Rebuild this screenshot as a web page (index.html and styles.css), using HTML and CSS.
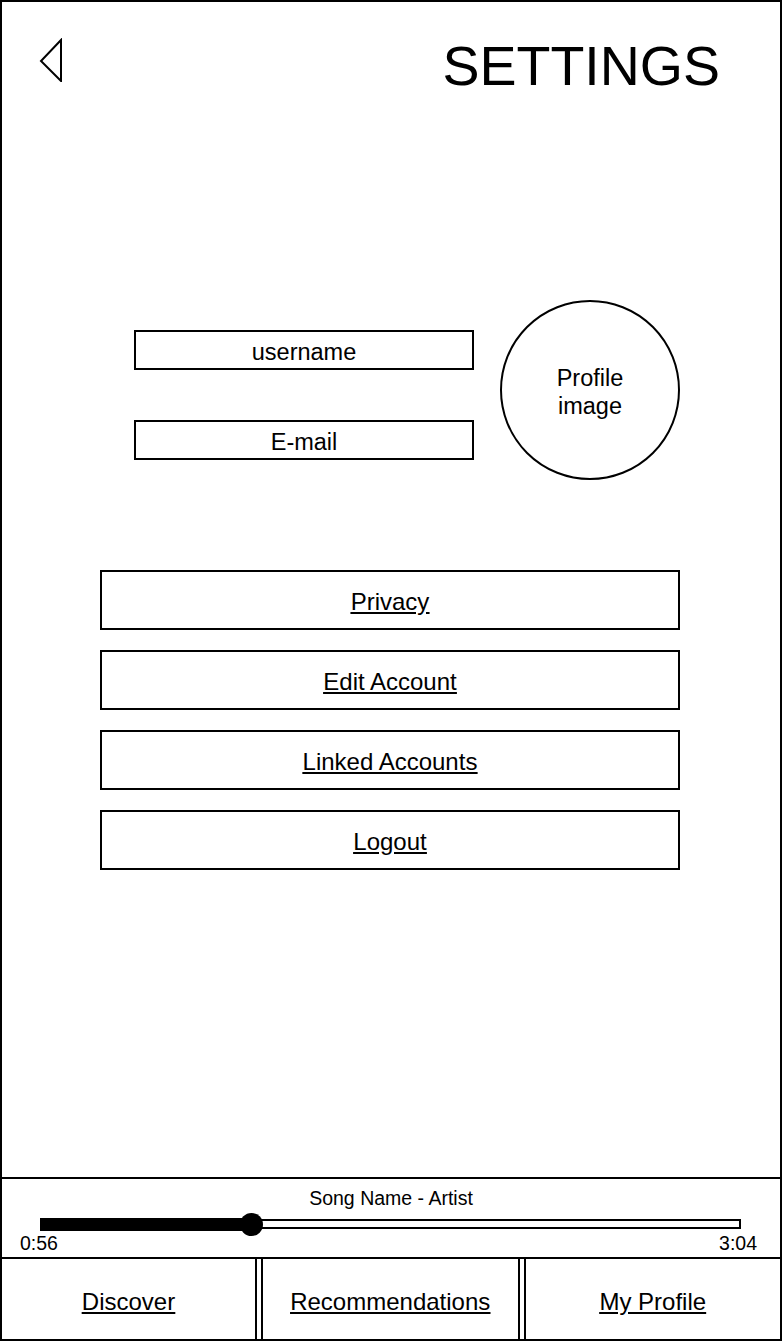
FILE: index.html
```html
<!DOCTYPE html>
<html lang="en">
<head>
    <meta charset="UTF-8">
    <meta name="viewport" content="width=device-width, initial-scale=1.0">
    <title>Settings</title>
    <link rel="stylesheet" href="styles.css">
</head>
<body>
    <div class="phone">
        <div class="header">
            <a href="#" class="back-link" aria-label="Back">
                <svg width="24" height="44" viewBox="0 0 24 44">
                    <polygon points="22,2 2,23 22,43" fill="none" stroke="#000" stroke-width="2"/>
                </svg>
            </a>
            <h1>SETTINGS</h1>
        </div>

        <div class="content">
            <div class="profile">
                <div class="fields">
                    <div class="field">username</div>
                    <div class="field">E-mail</div>
                </div>
                <div class="avatar">Profile<br>image</div>
            </div>

            <div class="menu">
                <a href="#" class="menu-btn"><span>Privacy</span></a>
                <a href="#" class="menu-btn"><span>Edit Account</span></a>
                <a href="#" class="menu-btn"><span>Linked Accounts</span></a>
                <a href="#" class="menu-btn"><span>Logout</span></a>
            </div>
        </div>

        <!-- now playing -->
        <div class="player">
            <div class="song">Song Name - Artist</div>
            <div class="progress">
                <div class="progress-fill" style="width: 30.1%"></div>
                <div class="progress-knob" style="left: 30.1%"></div>
            </div>
            <div class="times">
                <span>0:56</span>
                <span>3:04</span>
            </div>
        </div>

        <div class="nav">
            <a href="#" class="nav-item"><span>Discover</span></a>
            <div class="nav-divider"></div>
            <a href="#" class="nav-item"><span>Recommendations</span></a>
            <div class="nav-divider"></div>
            <a href="#" class="nav-item"><span>My Profile</span></a>
        </div>
    </div>
</body>
</html>
```

FILE: styles.css
```css
* {
    box-sizing: border-box;
}
body {
    margin: 0;
    font-family: "Liberation Sans", Arial, Helvetica, sans-serif;
    color: #000;
    background: #fff;
}
.phone {
    width: 782px;
    height: 1341px;
    border: 2px solid #000;
    display: flex;
    flex-direction: column;
}
.header {
    display: flex;
    justify-content: space-between;
    align-items: flex-start;
}
.back-link {
    display: block;
    margin: 36px 0 0 37px;
    line-height: 0;
}
.header h1 {
    margin: 36px 60px 0 0;
    font-size: 55.5px;
    line-height: 56px;
    font-weight: 400;
}
.content {
    flex: 1;
    padding: 0 100px 0 98px;
}
.profile {
    display: flex;
    justify-content: flex-end;
    align-items: flex-start;
    gap: 26px;
    margin-top: 206px;
}
.fields {
    width: 340px;
    display: flex;
    flex-direction: column;
    gap: 50px;
    margin-top: 30px;
}
.field {
    height: 40px;
    border: 2px solid #000;
    text-align: center;
    font-size: 23.5px;
    line-height: 36px;
    padding-top: 2px;
}
.avatar {
    width: 180px;
    height: 180px;
    border: 2px solid #000;
    border-radius: 50%;
    display: flex;
    align-items: center;
    justify-content: center;
    text-align: center;
    font-size: 23.5px;
    line-height: 28px;
    padding-top: 4px;
}
.menu {
    display: flex;
    flex-direction: column;
    gap: 20px;
    margin-top: 90px;
}
.menu-btn {
    height: 60px;
    border: 2px solid #000;
    display: flex;
    align-items: center;
    justify-content: center;
    color: #000;
    font-size: 24px;
    padding-top: 4px;
}
.menu-btn span,
.nav-item span {
    text-decoration: underline;
}
.player {
    height: 80px;
    border-top: 2px solid #000;
    padding-top: 7px;
}
.song {
    text-align: center;
    font-size: 19.5px;
    line-height: 24px;
}
.progress {
    position: relative;
    height: 10px;
    margin: 9px 39px 0 38px;
    border: 2px solid #000;
}
.progress-fill {
    position: absolute;
    left: -2px;
    top: -3px;
    height: 13px;
    background: #000;
}
.progress-knob {
    position: absolute;
    top: -8.5px;
    width: 23px;
    height: 23px;
    margin-left: -12px;
    border-radius: 50%;
    background: #000;
}
.times {
    display: flex;
    justify-content: space-between;
    padding: 0 23px 0 18px;
    font-size: 19.5px;
    line-height: 20px;
    margin-top: 4px;
}
.nav {
    height: 82px;
    border-top: 2px solid #000;
    display: flex;
}
.nav-item {
    flex: 1;
    display: flex;
    align-items: center;
    justify-content: center;
    color: #000;
    font-size: 24px;
    padding-top: 5px;
}
.nav-item:first-child {
    flex: 0 0 253px;
}
.nav-divider {
    width: 8px;
    border-left: 2px solid #000;
    border-right: 2px solid #000;
}
```
